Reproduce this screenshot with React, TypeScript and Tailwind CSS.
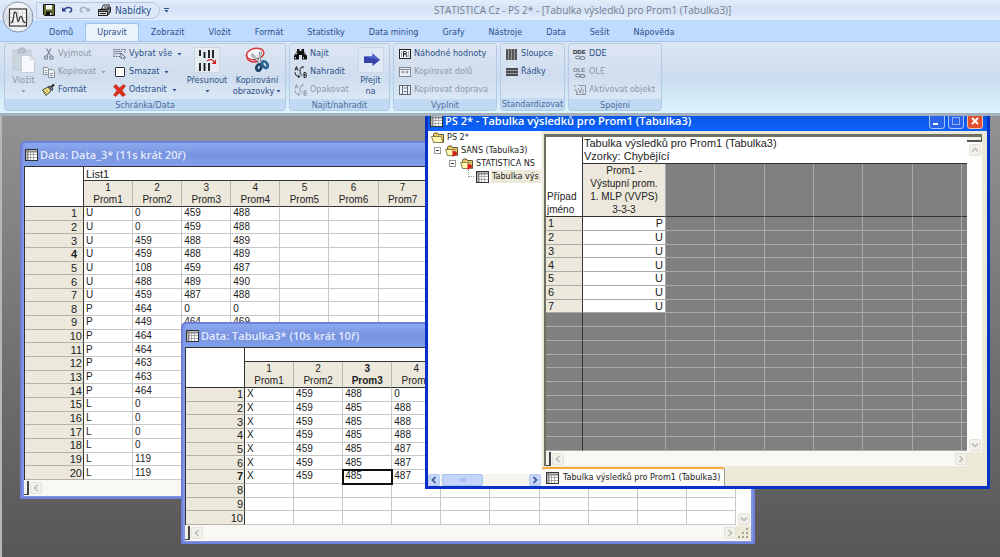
import React from 'react';
import clsx from 'clsx';

const TABS = ['Domů', 'Upravit', 'Zobrazit', 'Vložit', 'Formát', 'Statistiky', 'Data mining', 'Grafy', 'Nástroje', 'Data', 'Sešit', 'Nápověda'];

const DATA_ROWS: string[][] = [
  ['U', '0', '459', '488'],
  ['U', '0', '459', '488'],
  ['U', '459', '488', '489'],
  ['U', '459', '488', '489'],
  ['U', '108', '459', '487'],
  ['U', '488', '489', '490'],
  ['U', '459', '487', '488'],
  ['P', '464', '0', '0'],
  ['P', '449', '464', '469'],
  ['P', '464'],
  ['P', '464'],
  ['P', '463'],
  ['P', '463'],
  ['P', '464'],
  ['L', '0'],
  ['L', '0'],
  ['L', '0'],
  ['L', '0'],
  ['L', '119'],
  ['L', '119'],
];

const TABLE3_ROWS: string[][] = [
  ['X', '459', '488', '0'],
  ['X', '459', '485', '488'],
  ['X', '459', '485', '488'],
  ['X', '459', '485', '488'],
  ['X', '459', '485', '487'],
  ['X', '459', '485', '487'],
  ['X', '459', '485', '487'],
  [],
  [],
  [],
];

const RESULTS = ['P', 'U', 'U', 'U', 'U', 'U', 'U'];

/* ---------- icons ---------- */

type IconProps = { className?: string };

const OrbIcon = () => (
  <svg viewBox="0 0 32 32" className="h-8 w-8">
    <defs>
      <linearGradient id="orb" x1="0" y1="0" x2="0" y2="1">
        <stop offset="0" stopColor="#ffffff" />
        <stop offset="0.5" stopColor="#d3d9e2" />
        <stop offset="1" stopColor="#f5f8fc" />
      </linearGradient>
    </defs>
    <circle cx="16" cy="16" r="15" fill="url(#orb)" stroke="#8795ab" />
    <rect x="7.5" y="8" width="17" height="17" fill="#fbfbfb" stroke="#333" strokeWidth="1.2" />
    <path d="M11.5 8.5v16M16 8.5v16M20.5 8.5v16M8 12h16M8 16.5h16M8 21h16" stroke="#c4c4c4" strokeWidth="0.7" />
    <path d="M8.5 22c2.500 0 2.500-3 3.500-8.500.5-3.500 2-3.500 2.500 0l1 5.500c.3 2 1.200 2 1.600 0l.7-2.500c.6-2 1.600-2 2.200 0 .8 3.500 1.500 5 3.500 5.500" fill="none" stroke="#333" strokeWidth="1.200" />
  </svg>
);

const SaveIcon = () => (
  <svg viewBox="0 0 12 12" className="h-3 w-3">
    <path d="M0.500 0.500h11v11h-10l-1-1z" fill="#66702a" stroke="#111" />
    <rect x="3" y="1" width="6" height="4.500" fill="#f4f4f4" />
    <rect x="3" y="7.500" width="6" height="4" fill="#111" />
    <rect x="7" y="8.500" width="1.500" height="2.500" fill="#eee" />
  </svg>
);

const UndoIcon = ({ className }: IconProps) => (
  <svg viewBox="0 0 12 10" className={clsx('h-2.5 w-3', className)} fill="none" stroke="currentColor" strokeWidth="1.500">
    <path d="M2.500 5.500C4.500 2 9.500 1.500 10.500 4c.5 2-.8 3-2 3.500" />
    <path d="M1 2v4.500h4.500z" fill="currentColor" stroke="none" />
  </svg>
);

const PrintIcon = () => (
  <svg viewBox="0 0 15 13" className="h-[13px] w-[15px]" stroke="#222">
    <path d="M4.500 5l2-4h6l-2 4z" fill="#fff" />
    <path d="M1.500 5.500h9l3-2.500v5l-3 3.500h-9z" fill="#777" />
    <path d="M1.500 7.500h9v4h-9z" fill="#ddd" />
    <path d="M3 9.500h6M7 3h4" />
  </svg>
);

const PasteIcon = () => (
  <svg viewBox="0 0 24 26" className="h-[26px] w-6">
    <rect x="1" y="3" width="18" height="20" rx="1" fill="#ccd4de" stroke="#c0c8d4" />
    <path d="M6 4l2-3h4l2 3v2H6z" fill="#b9c2ce" stroke="#a7b0bd" strokeWidth="0.700" />
    <path d="M9.500 8.500h9l4 4v13h-13z" fill="#f7f9fc" stroke="#c8ced8" />
    <path d="M18.500 8.500v4h4" fill="none" stroke="#c8ced8" />
  </svg>
);

const CutIcon = () => (
  <svg viewBox="0 0 12 12" className="h-3 w-3" fill="none" stroke="#7d8694" strokeWidth="1.200">
    <path d="M3.500 0.500l4 7M8 0.500l-4 7" />
    <circle cx="3" cy="9.500" r="1.700" />
    <circle cx="8.500" cy="9.500" r="1.700" />
  </svg>
);

const CopyIcon = () => (
  <svg viewBox="0 0 12 12" className="h-3 w-3" fill="#eef1f5" stroke="#8b93a0">
    <path d="M0.500 1.500h4l2 2v5h-6z" />
    <path d="M5.500 3.500h4l2 2v6h-6z" />
    <path d="M7 7.500h3M7 9.500h3M2 4.500h2M2 6.500h2" />
  </svg>
);

const BrushIcon = () => (
  <svg viewBox="0 0 13 12" className="h-3 w-[13px]">
    <path d="M0.500 6L6 3l3 4-5 4.500z" fill="#f6e88a" stroke="#333" strokeWidth="0.900" />
    <path d="M2 7l3 3M4 5.500l2.500 3" stroke="#8a7a20" strokeWidth="0.800" />
    <path d="M6.500 2.500l3.500 4 1-1.500-3-3z" fill="#8890a0" stroke="#222" strokeWidth="0.800" />
    <path d="M9.500 3L12 0.500" stroke="#222" strokeWidth="2.200" />
  </svg>
);

const SelectAllIcon = () => (
  <svg viewBox="0 0 13 12" className="h-3 w-[13px]" fill="none" stroke="#5d6675">
    <path d="M0.500 1.500h11.500M0.500 8.500h7M1 1v8M12 1v5" strokeDasharray="1.500 1" />
    <path d="M2 3.500h7M2 5.500h7" stroke="#7a8494" />
    <path d="M8 5l4.500 4.500-2 .2 1 2M8 5v5.500l1.500-1" fill="#fff" />
  </svg>
);

const DeleteIcon = () => (
  <svg viewBox="0 0 13 13" className="h-[13px] w-[13px]">
    <path d="M0.500 2.500L3 0.500 6.500 4 10.500 0.500 12.500 2 9 6.500 12.500 11 9.500 12.500 6.500 9 2.500 12.500 0.500 11 4 6.500z" fill="#e0301a" stroke="#9c1c0c" strokeWidth="0.500" />
  </svg>
);

const MoveIcon = () => (
  <svg viewBox="0 0 26 26" className="h-[26px] w-[26px]">
    <rect x="0.500" y="0.500" width="25" height="25" fill="#e5ebf2" stroke="#ced6e0" />
    <path d="M6 3v6M10.500 5v6M15 3v8M19 3v8M6 16v8M10.500 16v8M15 16v8" stroke="#111" strokeWidth="1.800" />
    <path d="M13 14c3-2.500 6-1.500 7.500 1" fill="none" stroke="#d42424" strokeWidth="1.200" />
    <path d="M22 12.500v4.500h-4.500z" fill="#d42424" />
  </svg>
);

const ScreenCopyIcon = () => (
  <svg viewBox="0 0 28 28" className="h-[26px] w-[28px]">
    <ellipse cx="12" cy="7.500" rx="9.500" ry="6" fill="#f4f6fa" stroke="#d83a3a" strokeWidth="1.600" transform="rotate(-12 12 7.500)" />
    <path d="M3 8c-1 7 6 10 13 7" fill="none" stroke="#d83a3a" strokeWidth="1.600" />
    <path d="M8 8l11 10M18 5l-2 13" stroke="#555" strokeWidth="2.600" />
    <path d="M8 8l11 10M18 5l-2 13" stroke="#e4e8ee" strokeWidth="1.300" />
    <ellipse cx="16" cy="22" rx="2.500" ry="3.500" fill="none" stroke="#1c4668" strokeWidth="3" transform="rotate(25 16 22)" />
    <ellipse cx="22.500" cy="19" rx="2.500" ry="4" fill="none" stroke="#2b6490" strokeWidth="3" transform="rotate(-35 22.500 19)" />
  </svg>
);

const FindIcon = () => (
  <svg viewBox="0 0 13 12" className="h-3 w-[13px]" fill="#111">
    <path d="M3 1h2.500v2h2V1H10v2l3 5v3.500H8V7H5v4.500H0V8l3-5z" />
    <path d="M2 6.500l1-2M10.500 4.500l.8 2M1.500 9v1.500M9.500 9v1.500" stroke="#ddd" />
  </svg>
);

const ReplaceIcon = ({ className }: IconProps) => (
  <svg viewBox="0 0 13 12" className={clsx('h-3 w-[13px]', className)} fill="none" stroke="currentColor">
    <path d="M1 4.500L2.500 0.500 4 4.500M1.500 3h2" />
    <path d="M1 6c0 3 1.500 4.500 4 4.500M4 8.500l2 2-2 1.500M8.500 1C6.500 1 6 3 6 5.500s1 3.500 2.500 3.500M8 0l1.500 1L8 2.500" />
    <path d="M10 6.500v5h1.500c1.500 0 1.500-2.500 0-2.500H10h1.500c1 0 1-2.500 0-2.500z" />
  </svg>
);

const GoToIcon = () => (
  <svg viewBox="0 0 26 26" className="h-[26px] w-[26px]">
    <rect x="0.500" y="0.500" width="25" height="25" fill="#dfe9f5" stroke="#ccd7e6" />
    <path d="M6 9.500h8.500V6.500L22 13l-7.500 6v-3H6z" fill="#3444a8" />
    <path d="M6 9.500h8.500V6.500L22 13z" fill="#5266cc" />
  </svg>
);

const RandomIcon = () => (
  <svg viewBox="0 0 12 10" className="h-2.5 w-3" fill="none" stroke="#222">
    <rect x="0.500" y="0.500" width="11" height="9" fill="#f2f5fa" />
    <path d="M4.500 8V2.500h2c1.500 0 1.500 2.500 0 2.500H4.500h2c1 0 1 1 1.500 3" strokeWidth="1" />
    <path d="M2.500 2v6M9.700 2v6" stroke="#8e97a6" strokeWidth="0.800" />
  </svg>
);

const FillDownIcon = () => (
  <svg viewBox="0 0 12 10" className="h-2.5 w-3" fill="none" stroke="#7f8896">
    <rect x="0.500" y="0.500" width="11" height="9" fill="#eef2f8" />
    <path d="M1 2.500h10M4 3.500v3M8 3.500v3M2.500 5h3M6.500 5h3" />
  </svg>
);

const FillRightIcon = () => (
  <svg viewBox="0 0 12 10" className="h-2.5 w-3" fill="none" stroke="#5f6876">
    <rect x="0.500" y="0.500" width="11" height="9" fill="#eef2f8" />
    <path d="M3.500 1v8M8.500 1v8M5 3h2.500M5 6.500h2.500" />
  </svg>
);

const ColumnsIcon = () => (
  <svg viewBox="0 0 11 11" className="h-[11px] w-[11px]">
    <rect width="11" height="11" fill="#999" />
    <path d="M1 0v11M4 0v11M7 0v11M10 0v11" stroke="#333" strokeWidth="1.300" />
  </svg>
);

const RowsIcon = () => (
  <svg viewBox="0 0 12 8" className="h-2 w-3">
    <rect width="12" height="8" fill="#999" />
    <path d="M0 1h12M0 4h12M0 7h12" stroke="#333" strokeWidth="1.300" />
  </svg>
);

const LinkIcon = ({ label, className }: { label: string; className?: string }) => (
  <svg viewBox="0 0 13 13" className={clsx('h-[13px] w-[13px] overflow-visible', className)}>
    <text x="0" y="6" fontSize="6" fontWeight="700" fontFamily="Liberation Sans, sans-serif" fill="currentColor">
      {label}
    </text>
    <ellipse cx="5" cy="9.500" rx="2.500" ry="1.500" fill="none" stroke="#6c7684" />
    <ellipse cx="9.500" cy="10" rx="2.500" ry="1.500" fill="none" stroke="#6c7684" />
  </svg>
);

const ActivateIcon = () => (
  <svg viewBox="0 0 13 12" className="h-3 w-[13px]" fill="none" stroke="#8b94a2">
    <path d="M1 1l2 2M5.500 1.500h7v9h-9v-4" fill="#dde4ee" />
    <path d="M2 5l3 6M5 4l2 5M9 3L7 9M10 5v5" />
  </svg>
);

const SheetIcon = ({ className }: IconProps) => (
  <svg viewBox="0 0 13 12" className={clsx('h-3 w-[13px] shrink-0', className)}>
    <rect x="0.500" y="0.500" width="12" height="11" fill="#fff" stroke="#333" />
    <path d="M1 2.500h11M2.500 1v10" stroke="#888" strokeWidth="2" />
    <path d="M5.500 1v10M8.500 1v10M1 5.500h11M1 8.500h11" stroke="#999" strokeWidth="0.800" />
  </svg>
);

const FolderIcon = ({ marked }: { marked?: boolean }) => (
  <svg viewBox="0 0 14 12" className="h-3 w-3.5 shrink-0">
    <path d="M2.500 10.500v-8l1-1.500h3l1 1.500h5v8z" fill="#e8c860" stroke="#5c5530" />
    <path d="M0.500 4.500h9.500l2 6H2.500z" fill="#fff6b0" stroke="#8c8550" />
    {marked && <path d="M7.500 5l5.500 3.500L7.500 12z" fill="#d81818" />}
  </svg>
);

/* ---------- ribbon ---------- */

const Caret = ({ className }: IconProps) => (
  <svg viewBox="0 0 5 3" className={clsx('h-[3px] w-[5px]', className)} fill="currentColor">
    <path d="M0.500 0h4L2.500 2.500z" />
  </svg>
);

interface SmallButtonProps {
  icon: React.ReactNode;
  label: string;
  menu?: boolean;
  disabled?: boolean;
}

const SmallButton: React.FC<SmallButtonProps> = ({ icon, label, menu, disabled }) => (
  <button
    type="button"
    disabled={disabled}
    className={clsx('flex h-[18px] items-center gap-[3px] whitespace-nowrap', disabled ? 'text-[#8f99a8]' : 'text-[#2c5088]')}
  >
    <span className="flex w-[13px] justify-center">{icon}</span>
    {label}
    {menu && <Caret className="ml-[2px]" />}
  </button>
);

interface LargeButtonProps {
  icon: React.ReactNode;
  lines: string[];
  menu?: boolean;
  disabled?: boolean;
  className?: string;
}

const LargeButton: React.FC<LargeButtonProps> = ({ icon, lines, menu, disabled, className }) => (
  <button
    type="button"
    disabled={disabled}
    className={clsx('flex shrink-0 flex-col items-center pt-[2px] leading-[11px]', disabled ? 'text-[#8f99a8]' : 'text-[#2c5088]', className)}
  >
    {icon}
    <span className="pt-[2px]">{lines[0]}</span>
    <span className="flex h-[11px] items-center gap-[2px]">
      {lines[1]}
      {menu && <Caret />}
    </span>
  </button>
);

const RibbonGroup: React.FC<{ title: string; className?: string; children: React.ReactNode }> = ({ title, className, children }) => (
  <section
    className={clsx(
      'flex shrink-0 flex-col overflow-hidden rounded-[3px] border border-[#b3cbe6] bg-gradient-to-b from-[#dde6f3] via-[#cfddee] to-[#e0ecf8]',
      className
    )}
  >
    <div className="flex h-[55px] pt-px">{children}</div>
    <h2 className="h-3 bg-[#c1d9f2] text-center leading-[12px] text-[#4a6c9c]">{title}</h2>
  </section>
);

const Ribbon = () => (
  <div className="flex h-[72px] gap-[3px] border-t border-[#a5c5ee] bg-gradient-to-b from-[#dde6f4] via-[#cbdcee] to-[#dcf5fd] px-1 pt-px pb-[2px] text-[9px]">
    <RibbonGroup title="Schránka/Data" className="w-[282px]">
      <LargeButton icon={<PasteIcon />} lines={['Vložit', '']} menu disabled className="w-[37px]" />
      <div className="w-[71px]">
        <SmallButton icon={<CutIcon />} label="Vyjmout" disabled />
        <SmallButton icon={<CopyIcon />} label="Kopírovat" menu disabled />
        <SmallButton icon={<BrushIcon />} label="Formát" />
      </div>
      <div className="w-[69px]">
        <SmallButton icon={<SelectAllIcon />} label="Vybrat vše" menu />
        <SmallButton icon={<span className="h-2.5 w-2.5 rounded-[1px] border border-[#333] bg-white" />} label="Smazat" menu />
        <SmallButton icon={<DeleteIcon />} label="Odstranit" menu />
      </div>
      <LargeButton icon={<MoveIcon />} lines={['Přesunout', '']} menu className="w-[50px]" />
      <LargeButton icon={<ScreenCopyIcon />} lines={['Kopírování', 'obrazovky']} menu className="w-[50px]" />
    </RibbonGroup>
    <RibbonGroup title="Najít/nahradit" className="w-[101px]">
      <div className="w-[65px] pl-1">
        <SmallButton icon={<FindIcon />} label="Najít" />
        <SmallButton icon={<ReplaceIcon className="text-[#222]" />} label="Nahradit" />
        <SmallButton icon={<ReplaceIcon />} label="Opakovat" disabled />
      </div>
      <LargeButton icon={<GoToIcon />} lines={['Přejít', 'na']} className="w-[31px]" />
    </RibbonGroup>
    <RibbonGroup title="Vyplnit" className="w-[104px]">
      <div className="pl-1">
        <SmallButton icon={<RandomIcon />} label="Náhodné hodnoty" />
        <SmallButton icon={<FillDownIcon />} label="Kopírovat dolů" disabled />
        <SmallButton icon={<FillRightIcon />} label="Kopírovat doprava" disabled />
      </div>
    </RibbonGroup>
    <RibbonGroup title="Standardizovat" className="w-[65px]">
      <div className="pl-1">
        <SmallButton icon={<ColumnsIcon />} label="Sloupce" />
        <SmallButton icon={<RowsIcon />} label="Řádky" />
      </div>
    </RibbonGroup>
    <RibbonGroup title="Spojení" className="w-[94px]">
      <div className="pl-1">
        <SmallButton icon={<LinkIcon label="DDE" className="text-[#222]" />} label="DDE" />
        <SmallButton icon={<LinkIcon label="OLE" className="text-[#7b8492]" />} label="OLE" disabled />
        <SmallButton icon={<ActivateIcon />} label="Aktivovat objekt" disabled />
      </div>
    </RibbonGroup>
  </div>
);

const AppHeader = () => (
  <header className="relative z-10 shrink-0 border-b-[3px] border-[#a3afbd] font-['DejaVu_Sans_Condensed','DejaVu_Sans',sans-serif]">
    <div className="flex h-5 items-center bg-gradient-to-b from-[#e3edfa] via-[#d3e2f7] to-[#e6effb] pl-9">
      <div className="flex h-[17px] items-center gap-[6px] rounded-r-full border border-[#b4c8e4] bg-[#dce8f8] pr-2 pl-1.5 text-[10px] text-[#2c5088]">
        <button type="button" aria-label="Uložit"><SaveIcon /></button>
        <button type="button" aria-label="Zpět"><UndoIcon className="text-[#2b3f8c]" /></button>
        <button type="button" aria-label="Znovu"><UndoIcon className="-scale-x-100 text-[#9fb0c8]" /></button>
        <button type="button" className="flex items-center gap-[3px]"><PrintIcon />Nabídky</button>
      </div>
      <button type="button" aria-label="Přizpůsobit panel" className="ml-1 flex flex-col items-center gap-px text-[#2c5088]">
        <span className="h-px w-[5px] bg-[#2c5088]" />
        <Caret />
      </button>
      <h1 className="flex-1 pr-1 text-center text-[10px] text-[#737d8c] font-['Open_Sans','Noto_Sans',sans-serif]">STATISTICA Cz - PS 2* - [Tabulka výsledků pro Prom1 (Tabulka3)]</h1>
    </div>
    <nav className="flex h-[21px] items-end bg-[#bfdbff] pl-[37px] text-[9px] text-[#2c5088]">
      {TABS.map((tab) => (
        <a
          key={tab}
          href="#"
          className={clsx(
            'flex h-[18px] items-center border-x border-t px-[11px] whitespace-nowrap',
            tab === 'Upravit' ? 'rounded-t-[3px] border-[#a3c0e6] bg-[#eaf2fc]' : 'border-transparent'
          )}
        >
          {tab}
        </a>
      ))}
    </nav>
    <Ribbon />
    <button type="button" aria-label="Nabídka aplikace" className="absolute top-px left-[2px]">
      <OrbIcon />
    </button>
  </header>
);

/* ---------- windows ---------- */

const Chevron: React.FC<{ dir: 'up' | 'down' | 'left' | 'right' }> = ({ dir }) => (
  <svg
    viewBox="0 0 8 8"
    className={clsx('h-2 w-2', dir === 'up' && 'rotate-90', dir === 'down' && '-rotate-90', dir === 'right' && 'rotate-180')}
    fill="none"
    stroke="currentColor"
    strokeWidth="1.700"
  >
    <path d="M5.500 1L2.500 4l3 3" />
  </svg>
);

const ScrollButton: React.FC<{ dir: 'up' | 'down' | 'left' | 'right'; label: string; active?: boolean }> = ({ dir, label, active }) => (
  <button
    type="button"
    aria-label={label}
    className={clsx(
      'flex h-3 w-3 shrink-0 items-center justify-center rounded-[2px] border',
      active ? 'border-[#b4c8f6] bg-[#c6d6fb] text-[#33508c]' : 'border-[#e4e2d8] bg-[#f1f0ea] text-[#c0bfb6]'
    )}
  >
    <Chevron dir={dir} />
  </button>
);

const HScroll = () => (
  <div className="flex h-[14px] min-w-0 flex-1 items-center bg-[#f8f8f4]">
    <span className="h-full w-[5px] border-r-2 border-b border-[#444] bg-[#f4f2e8]" />
    <span className="ml-px flex flex-1 justify-between">
      <ScrollButton dir="left" label="Posunout vlevo" />
      <ScrollButton dir="right" label="Posunout vpravo" />
    </span>
  </div>
);

const VScroll = () => (
  <div className="flex w-[15px] shrink-0 flex-col items-center justify-between bg-[#fdfdfb]">
    <div className="flex w-full flex-col items-center gap-[2px]">
      <span className="h-[5px] w-full border-r border-b-2 border-[#555] bg-[#f4f2e8]" />
      <ScrollButton dir="up" label="Posunout nahoru" />
    </div>
    <ScrollButton dir="down" label="Posunout dolů" />
  </div>
);

interface SheetProps {
  title: string;
  rows: string[][];
  activeRow: number;
  activeColumn?: number;
  insetNumbers?: boolean;
}

const Sheet: React.FC<SheetProps> = ({ title, rows, activeRow, activeColumn, insetNumbers }) => {
  const columns = Array.from({ length: 10 }, (_, i) => i + 1);

  return (
    <table className="h-full w-full table-fixed border-separate border-spacing-0 border-t border-l border-[#333] text-[11px] leading-[12px] text-[#222]">
      <colgroup>
        <col className="w-[59px]" />
      </colgroup>
      <thead>
        <tr className="h-[14px]">
          <td rowSpan={2} className="border-r border-b border-[#333] bg-white" />
          <th colSpan={10} className="h-[14px] border-b border-[#333] bg-white p-0 pl-[2px] text-left font-normal">{title}</th>
        </tr>
        <tr className="h-[26px]">
          {columns.map((n) => (
            <th
              key={n}
              scope="col"
              className={clsx('border-r border-b border-r-[#bbb8a8] border-b-[#333] bg-[#ece9dc] p-0 text-[10px]', n === activeColumn ? 'font-bold' : 'font-normal')}
            >
              {n}
              <br />
              Prom{n}
            </th>
          ))}
        </tr>
      </thead>
      <tbody className="text-[10px]">
        {rows.map((row, r) => (
          <tr key={r}>
            <th
              scope="row"
              className={clsx(
                'border-r border-b border-r-[#333] border-b-[#b5b2a4] bg-[#ece9dc] py-0 text-right text-[11px]',
                insetNumbers && r < 9 ? 'pr-[6px]' : 'pr-px',
                r + 1 === activeRow ? 'font-bold' : 'font-normal'
              )}
            >
              {r + 1}
            </th>
            {columns.map((n) => (
              <td
                key={n}
                className={clsx(
                  'border-r border-b border-[#c8c8c8] bg-white py-0 pr-0 pl-[2px]',
                  r + 1 === activeRow && n === activeColumn && 'outline-2 -outline-offset-1 outline-[#111]'
                )}
              >
                {row[n - 1]}
              </td>
            ))}
          </tr>
        ))}
      </tbody>
    </table>
  );
};

const DataWindow: React.FC<{ title: string; className: string; children: React.ReactNode }> = ({ title, className, children }) => (
  <section className={clsx('absolute flex w-[574px] flex-col rounded-t-[5px] border-2 border-[#6f80dc] bg-[#8197e6] px-[2px] pb-px', className)}>
    <header className="flex h-[23px] shrink-0 items-center gap-[2px] rounded-t-[4px] bg-gradient-to-b from-[#8caaf0] via-[#7893e0] to-[#80a0ea] pt-px pl-px">
      <SheetIcon />
      <h2 className="text-[11px] font-semibold text-[#e4ebfc] font-['Open_Sans','Noto_Sans',sans-serif]">{title}</h2>
    </header>
    <div className="flex min-h-0 flex-1">
      <div className="min-w-0 flex-1">{children}</div>
      <VScroll />
    </div>
    <div className="flex h-4 shrink-0 items-center bg-[#f8f8f4]">
      <HScroll />
      <svg viewBox="0 0 15 14" className="h-[14px] w-[15px] bg-[#ece9d8]" fill="#a8a594">
        <path d="M10 2h2v2h-2zM10 6h2v2h-2zM10 10h2v2h-2zM6 6h2v2H6zM6 10h2v2H6zM2 10h2v2H2z" />
      </svg>
    </div>
  </section>
);

const TreeToggle = () => (
  <button type="button" aria-label="Sbalit" className="flex h-[7px] w-[7px] shrink-0 items-center justify-center border border-[#999] bg-white">
    <span className="h-px w-[3px] bg-[#333]" />
  </button>
);

const TreePane = () => (
  <aside className="flex w-[113px] shrink-0 flex-col justify-between overflow-hidden bg-white font-['DejaVu_Sans_Condensed','DejaVu_Sans',sans-serif] text-[9px] text-[#222]">
    <ul className="whitespace-nowrap">
      <li className="flex h-[13px] items-center gap-[2px] pl-[3px]"><FolderIcon />PS 2*</li>
      <li className="flex h-[13px] items-center gap-1 pl-[6px]"><TreeToggle /><span className="flex items-center gap-[2px]"><FolderIcon marked />SANS (Tabulka3)</span></li>
      <li className="flex h-[13px] items-center gap-1 pl-[21px]"><TreeToggle /><span className="flex items-center gap-[2px]"><FolderIcon marked />STATISTICA NS</span></li>
      <li className="flex h-[13px] items-center gap-[2px] pl-10">
        <span className="h-[7px] w-[6px] self-start border-b border-l border-dotted border-[#999]" />
        <SheetIcon />
        <span className="flex-1 bg-[#ece9d8] pl-px">Tabulka výs</span>
      </li>
    </ul>
    <div className="flex h-3 items-center bg-[#f6f5f0]">
      <ScrollButton dir="left" label="Posunout vlevo" active />
      <span className="ml-[2px] flex h-3 w-[41px] items-center justify-center rounded-[2px] border border-[#a9c0f5] bg-[#c4d5fc]">
        <span className="h-1 w-[6px] bg-[#aac0f4]" />
      </span>
      <span className="flex-1" />
      <ScrollButton dir="right" label="Posunout vpravo" active />
    </div>
  </aside>
);

const ResultTable = () => {
  const rows = Array.from({ length: 17 }, (_, i) => i);
  const empty = Array.from({ length: 7 }, (_, i) => i);

  return (
    <table className="h-full w-full table-fixed border-separate border-spacing-0 text-[11px] leading-[13px] text-[#222]">
      <colgroup>
        <col className="w-[37px]" />
        <col className="w-[83px]" />
        {empty.map((c) => (
          <col key={c} className={c === 6 ? 'w-[5px]' : undefined} />
        ))}
      </colgroup>
      <thead>
        <tr className="h-[27px]">
          <th rowSpan={2} className="border-r border-b border-[#333] bg-white p-0 pl-px text-left align-bottom text-[10px] font-normal">
            Případ
            <br />
            jméno
          </th>
          <th colSpan={8} className="border-b border-[#333] bg-white p-0 pl-px text-left font-normal">
            Tabulka výsledků pro Prom1 (Tabulka3)
            <br />
            Vzorky: Chybějící
          </th>
        </tr>
        <tr className="h-[53px]">
          <th scope="col" className="border-r border-b border-r-[#aaa] border-b-[#333] bg-[#ece9dc] p-0 text-center text-[10px] font-normal">
            Prom1 -
            <br />
            Výstupní prom.
            <br />
            1. MLP (VVPS)
            <br />
            3-3-3
          </th>
          {empty.map((c) => (
            <td key={c} className={clsx('border-b border-b-[#333] border-r-[#aaa] bg-[#808080] p-0', c < 6 && 'border-r')} />
          ))}
        </tr>
      </thead>
      <tbody className="leading-[12px]">
        {rows.map((r) => (
          <tr key={r}>
            <th
              scope="row"
              className={clsx(
                'border-r border-b border-r-[#333] border-b-[#aaa] p-0 pl-[2px] text-left font-normal',
                r < 7 ? 'bg-[#ece9dc]' : 'bg-[#808080]'
              )}
            >
              {r < 7 ? r + 1 : '\u00a0'}
            </th>
            <td className={clsx('border-r border-b border-[#aaa] p-0 pr-[2px] text-right', r < 7 ? 'bg-white' : 'bg-[#808080]')}>{RESULTS[r]}</td>
            {empty.map((c) => (
              <td key={c} className={clsx('border-b border-[#aaa] bg-[#808080] p-0', c < 6 && 'border-r')} />
            ))}
          </tr>
        ))}
      </tbody>
    </table>
  );
};

const ResultWindow = () => (
  <section className="absolute -top-[9px] left-[423px] flex h-[382px] w-[565px] flex-col rounded-t-[5px] border-x-[3px] border-b-[3px] border-[#0831c8] bg-[#0831c8]">
    <header className="flex h-6 shrink-0 items-center gap-[2px] bg-gradient-to-b from-[#0a50d8] to-[#0a62fb] pt-1 pr-1 pl-[2px]">
      <SheetIcon />
      <h2 className="flex-1 text-[11px] font-semibold text-white font-['Open_Sans','Noto_Sans',sans-serif]">PS 2* - Tabulka výsledků pro Prom1 (Tabulka3)</h2>
      <div className="flex gap-[3px]">
        <button type="button" aria-label="Minimalizovat" className="flex h-4 w-4 items-end rounded-[3px] border border-[#a9c6fa] bg-[#2a63e8] p-[3px]">
          <span className="h-[2px] w-[5px] bg-white" />
        </button>
        <button type="button" aria-label="Maximalizovat" className="flex h-4 w-4 items-center justify-center rounded-[3px] border border-[#a9c6fa] bg-[#2a63e8]">
          <span className="h-2 w-2 border border-[#8fb2f5]" />
        </button>
        <button type="button" aria-label="Zavřít" className="flex h-4 w-4 items-center justify-center rounded-[3px] border border-[#f3c0b0] bg-[#e0502c]">
          <svg viewBox="0 0 8 8" className="h-2 w-2" stroke="#fff" strokeWidth="1.800">
            <path d="M1 1l6 6M7 1L1 7" />
          </svg>
        </button>
      </div>
    </header>
    <div className="flex min-h-0 flex-1 bg-[#ece9d8]">
      <TreePane />
      <div className="flex min-w-0 flex-1 flex-col border-l border-[#f8f8f4]">
        <div className="mt-[3px] mr-[5px] ml-[2px] flex min-h-0 flex-1 flex-col border-t-[3px] border-l-2 border-[#6f7064] bg-[#f8f8f4]">
          <div className="flex min-h-0 flex-1">
            <div className="min-w-0 flex-1">
              <ResultTable />
            </div>
            <VScroll />
          </div>
          <div className="flex h-[15px] shrink-0 items-center">
            <HScroll />
            <span className="h-[14px] w-[15px] bg-[#ece9d8]" />
          </div>
        </div>
        <div className="flex h-5 shrink-0 pt-px">
          <button
            type="button"
            className="flex items-center gap-1 rounded-t-[3px] border-t-2 border-r border-t-[#f5ab3c] border-r-[#a0a09a] bg-[#fcfcfa] px-1 font-['DejaVu_Sans_Condensed','DejaVu_Sans',sans-serif] text-[9px] text-[#222]"
          >
            <SheetIcon />
            Tabulka výsledků pro Prom1 (Tabulka3)
          </button>
        </div>
      </div>
    </div>
  </section>
);

const App = () => (
  <div className="flex h-screen flex-col overflow-hidden">
    <AppHeader />
    <main className="relative min-h-0 flex-1 overflow-hidden border-l-2 border-[#b8b8b0] bg-gradient-to-b from-[#929292] to-[#575757] font-['Liberation_Sans',Arial,sans-serif]">
      <DataWindow title="Data: Data_3* (11s krát 20ř)" className="top-[25px] left-[18px] h-[358px]">
        <Sheet title="List1" rows={DATA_ROWS} activeRow={4} insetNumbers />
      </DataWindow>
      <DataWindow title="Data: Tabulka3* (10s krát 10ř)" className="top-[206px] left-[179px] h-[222px]">
        <Sheet title="" rows={TABLE3_ROWS} activeRow={7} activeColumn={3} />
      </DataWindow>
      <ResultWindow />
    </main>
  </div>
);

export default App;
